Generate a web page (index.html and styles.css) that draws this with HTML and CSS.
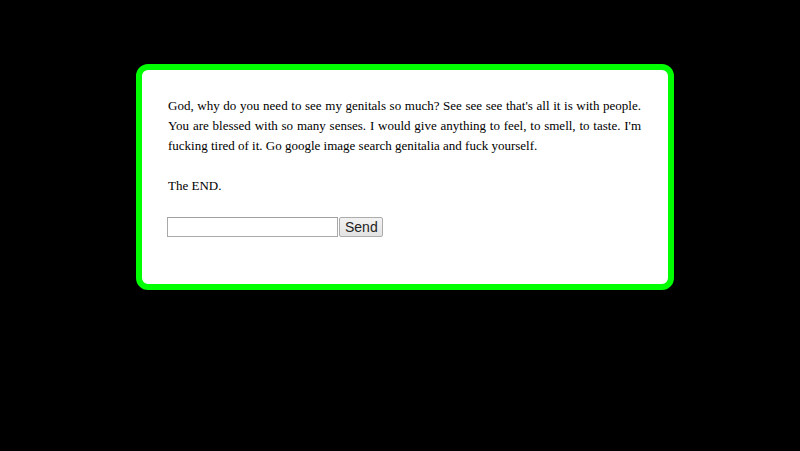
FILE: index.html
```html
<!DOCTYPE html>
<html>
<head>
<meta charset="utf-8">
<link rel="stylesheet" href="styles.css">
</head>
<body>
<div class="box">
  <p class="story">God, why do you need to see my genitals so much? See see see that's all it is with people. You are blessed with so many senses. I would give anything to feel, to smell, to taste. I'm fucking tired of it. Go google image search genitalia and fuck yourself.</p>
  <p class="end">The END.</p>
  <form class="reply">
    <input class="field" type="text"><button class="send" type="button">Send</button>
  </form>
</div>
</body>
</html>
```
FILE: styles.css
```css
html, body {
  margin: 0;
  padding: 0;
  background: #000;
}
body {
  padding-top: 64px;
  font-family: "Liberation Serif", "Times New Roman", serif;
  font-size: 13px;
  line-height: 20px;
  color: #000;
}
.box {
  box-sizing: border-box;
  width: 538px;
  height: 226px;
  margin-left: 136px;
  background: #fff;
  border: 6px solid #00ff00;
  border-radius: 12px;
  padding: 26px 27px 0 26px;
}
.story {
  margin: 0;
  text-align: justify;
}
.end {
  margin: 20px 0 0 0;
}
.reply {
  margin: 21px 0 0 0;
  display: flex;
  align-items: stretch;
  height: 20px;
}
.field {
  box-sizing: border-box;
  width: 171px;
  height: 20px;
  margin: 0 0 0 -1px;
  padding: 1px 3px;
  border: 1px solid #a9a9a9;
  border-top-color: #a0a0a0;
  background: #fff;
  font: 14px "Liberation Sans", Arial, sans-serif;
}
.send {
  box-sizing: border-box;
  height: 20px;
  width: 44px;
  margin: 0 0 0 1px;
  padding: 0 5px;
  border: 1px solid #acacac;
  border-radius: 2px;
  background: linear-gradient(#f2f2f2, #e3e3e3);
  color: #222;
  font: 14px "Liberation Sans", Arial, sans-serif;
  line-height: 16px;
}
```
